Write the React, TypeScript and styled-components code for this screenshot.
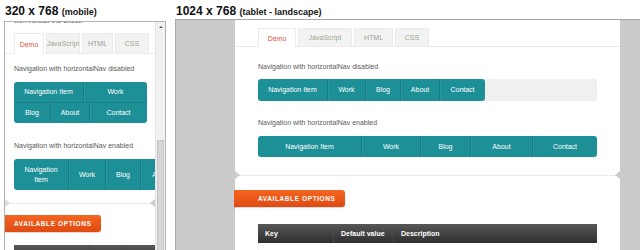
import styled, { createGlobalStyle } from "styled-components";

const GlobalStyle = createGlobalStyle`
  html, body {
    margin: 0;
    padding: 0;
    background: #fff;
  }
  body {
    font-family: "Liberation Sans", Arial, sans-serif;
    overflow: hidden;
  }
`;

const TEAL = "#1d8f97";

type NavItemData = { label: string; w: number };

export default function App() {
    return (
        <>
            <GlobalStyle />
            <Page>
                <Column $w={162}>
                    <DeviceLabel>
                        320 x 768 <small>(mobile)</small>
                    </DeviceLabel>
                    <MobileFrame>
                        <Viewport>
                            <ClippedLine>won't break the effect.</ClippedLine>
                            <TabBar $inset={9} $h={20} $mt={7}>
                                <Tab $w={30} $active>Demo</Tab>
                                <Tab $w={34}>JavaScript</Tab>
                                <Tab $w={31} $muted>HTML</Tab>
                                <Tab $w={34}>CSS</Tab>
                            </TabBar>
                            <Section $pad={9}>
                                <Caption $mt={10}>Navigation with horizontalNav disabled</Caption>
                                <Nav $mt={8} $w={133}>
                                    <NavRow items={[{ label: "Navigation Item", w: 69 }, { label: "Work", w: 64 }]} h={20} />
                                    <NavRow
                                        items={[
                                            { label: "Blog", w: 36 },
                                            { label: "About", w: 39 },
                                            { label: "Contact", w: 58 },
                                        ]}
                                        h={20}
                                        divided
                                    />
                                </Nav>
                                <Caption $mt={18}>Navigation with horizontalNav enabled</Caption>
                                <Nav $mt={8} $w={238}>
                                    <NavRow
                                        items={[
                                            { label: "Navigation Item", w: 54 },
                                            { label: "Work", w: 37 },
                                            { label: "Blog", w: 35 },
                                            { label: "About", w: 42 },
                                            { label: "Contact", w: 70 },
                                        ]}
                                        h={31}
                                        wrapText
                                    />
                                </Nav>
                            </Section>
                            <Divider $mt={13} $left="#dcdcdc" />
                            <OptionsButton $mt={11} $w={96} $pad={9}>
                                AVAILABLE OPTIONS
                            </OptionsButton>
                            <Section $pad={9}>
                                <TableHead $mt={13} $w={150}>
                                    <Th $w={74}>Key</Th>
                                    <Th $w={37}>Default</Th>
                                    <Th>Info</Th>
                                </TableHead>
                            </Section>
                        </Viewport>
                        <Scrollbar>
                            <ScrollArrow />
                            <ScrollTrack />
                            <ScrollThumb />
                        </Scrollbar>
                    </MobileFrame>
                </Column>

                <Column>
                    <DeviceLabel>
                        1024 x 768 <small>(tablet - landscape)</small>
                    </DeviceLabel>
                    <TabletFrame>
                        <TabletPage>
                            <TabBar $inset={23} $h={18} $mt={8}>
                                <Tab $w={38} $active>Demo</Tab>
                                <Tab $w={54}>JavaScript</Tab>
                                <Tab $w={39} $muted>HTML</Tab>
                                <Tab $w={34}>CSS</Tab>
                            </TabBar>
                            <Section $pad={23}>
                                <Caption $mt={15}>Navigation with horizontalNav disabled</Caption>
                                <NavTrack $mt={7}>
                                    <Nav $w={227}>
                                        <NavRow
                                            items={[
                                                { label: "Navigation Item", w: 69 },
                                                { label: "Work", w: 38 },
                                                { label: "Blog", w: 35 },
                                                { label: "About", w: 39 },
                                                { label: "Contact", w: 46 },
                                            ]}
                                            h={22}
                                        />
                                    </Nav>
                                </NavTrack>
                                <Caption $mt={17}>Navigation with horizontalNav enabled</Caption>
                                <Nav $mt={8} $w={339}>
                                    <NavRow
                                        items={[
                                            { label: "Navigation Item", w: 103 },
                                            { label: "Work", w: 59 },
                                            { label: "Blog", w: 50 },
                                            { label: "About", w: 62 },
                                            { label: "Contact", w: 65 },
                                        ]}
                                        h={21}
                                    />
                                </Nav>
                            </Section>
                            <Divider $mt={18} $left="#cccccc" />
                            <OptionsButton $mt={14} $w={111} $pad={24} $shift>
                                AVAILABLE OPTIONS
                            </OptionsButton>
                            <Section $pad={23}>
                                <TableHead $mt={17} $w={339}>
                                    <Th $w={75}>Key</Th>
                                    <Th $w={60}>Default value</Th>
                                    <Th>Description</Th>
                                </TableHead>
                                <TableRow />
                            </Section>
                        </TabletPage>
                    </TabletFrame>
                </Column>
            </Page>
        </>
    );
}

function NavRow({ items, h, divided, wrapText }: { items: NavItemData[]; h: number; divided?: boolean; wrapText?: boolean }) {
    return (
        <Row $h={h} $divided={divided}>
            {items.map((item, i) => (
                <NavItem key={item.label} $w={item.w} $first={i === 0} $wrap={wrapText}>
                    {item.label}
                </NavItem>
            ))}
        </Row>
    );
}

const Page = styled.div`
    display: flex;
    gap: 9px;
    padding-left: 4px;
    height: 250px;
    overflow: hidden;
`;

const Column = styled.div<{ $w?: number }>`
    display: flex;
    flex-direction: column;
    flex: ${(p) => (p.$w ? `0 0 ${p.$w}px` : "1 0 auto")};
    min-width: 0;
`;

const DeviceLabel = styled.div`
    height: 21px;
    box-sizing: border-box;
    padding: 4px 0 0 1px;
    font-size: 12px;
    font-weight: bold;
    color: #111;
    white-space: nowrap;
    line-height: 14px;

    small {
        font-size: 9px;
    }
`;

const MobileFrame = styled.div`
    flex: 1;
    display: flex;
    border: 1px solid #b2b2b2;
    border-bottom: none;
    overflow: hidden;
    background: #fff;
`;

const Viewport = styled.div`
    flex: 1;
    min-width: 0;
    overflow: hidden;
    display: flex;
    flex-direction: column;
`;

const ClippedLine = styled.div`
    margin-top: -6px;
    padding-left: 9px;
    line-height: 10px;
    font-size: 7px;
    color: #5a5a5a;
    white-space: nowrap;
`;

const Scrollbar = styled.div`
    width: 9px;
    flex-shrink: 0;
    display: flex;
    flex-direction: column;
    background: #f1f1f1;
    border-left: 1px solid #e3e3e3;
`;

const ScrollArrow = styled.div`
    height: 10px;
    display: flex;
    align-items: center;
    justify-content: center;

    &::before {
        content: "";
        border: 2px solid transparent;
        border-bottom: 2px solid #555;
        margin-top: -2px;
    }
`;

const ScrollTrack = styled.div`
    height: 108px;
`;

const ScrollThumb = styled.div`
    flex: 1;
    margin: 0 1px;
    background: #d6d6d6;
    border: 1px solid #c6c6c6;
    border-bottom: none;
`;

const TabletFrame = styled.div`
    flex: 1;
    display: flex;
    border-top: 1px solid #a8a8a8;
    border-left: 1px solid #a8a8a8;
    background: #cbcbcb;
`;

const TabletPage = styled.div`
    width: 385px;
    margin-left: 59px;
    flex-shrink: 0;
    background: #fff;
    display: flex;
    flex-direction: column;
`;

const Section = styled.div<{ $pad: number }>`
    padding: 0 ${(p) => p.$pad}px;
    display: flex;
    flex-direction: column;
`;

const TabBar = styled.div<{ $inset: number; $h: number; $mt: number }>`
    display: flex;
    align-items: flex-end;
    gap: 2px;
    height: ${(p) => p.$h}px;
    margin-top: ${(p) => p.$mt}px;
    padding-left: ${(p) => p.$inset}px;
    border-bottom: 1px solid #ebebeb;
    flex-shrink: 0;
`;

const Tab = styled.div<{ $w: number; $active?: boolean; $muted?: boolean }>`
    width: ${(p) => p.$w}px;
    height: ${(p) => (p.$active ? "calc(100% + 1px)" : "100%")};
    margin-bottom: ${(p) => (p.$active ? "-1px" : "0")};
    box-sizing: border-box;
    display: flex;
    align-items: center;
    justify-content: center;
    overflow: hidden;
    white-space: nowrap;
    font-size: 7px;
    background: ${(p) => (p.$active ? "#fff" : "#f3f3f3")};
    color: ${(p) => (p.$active ? "#e0523a" : p.$muted ? "#9a9a9a" : "#98a98c")};
    border: 1px solid #ebebeb;
    border-bottom: none;
    border-radius: 2px 2px 0 0;
`;

const Caption = styled.div<{ $mt: number }>`
    margin-top: ${(p) => p.$mt}px;
    line-height: 10px;
    font-size: 7px;
    color: #5a5a5a;
    white-space: nowrap;
`;

const Nav = styled.div<{ $w: number; $mt?: number }>`
    width: ${(p) => p.$w}px;
    margin-top: ${(p) => p.$mt ?? 0}px;
    flex-shrink: 0;
    display: flex;
    flex-direction: column;
    background: ${TEAL};
    border-radius: 3px;
    overflow: hidden;
`;

const NavTrack = styled.div<{ $mt: number }>`
    margin-top: ${(p) => p.$mt}px;
    width: 339px;
    display: flex;
    background: #f0f0f0;
    border-radius: 3px;
`;

const Row = styled.div<{ $h: number; $divided?: boolean }>`
    display: flex;
    height: ${(p) => p.$h}px;
    border-top: ${(p) => (p.$divided ? "1px solid rgba(0, 0, 0, 0.1)" : "none")};
`;

const NavItem = styled.div<{ $w: number; $first: boolean; $wrap?: boolean }>`
    width: ${(p) => p.$w}px;
    flex-shrink: 0;
    box-sizing: border-box;
    display: flex;
    align-items: center;
    justify-content: center;
    text-align: center;
    padding: 0 ${(p) => (p.$wrap ? 6 : 0)}px;
    white-space: ${(p) => (p.$wrap ? "normal" : "nowrap")};
    line-height: 10px;
    font-size: 7px;
    color: #fff;
    border-left: ${(p) => (p.$first ? "none" : "1px solid rgba(0, 0, 0, 0.12)")};
    box-shadow: ${(p) => (p.$first ? "none" : "inset 1px 0 rgba(255, 255, 255, 0.07)")};
`;

const Divider = styled.div<{ $mt: number; $left: string }>`
    position: relative;
    margin-top: ${(p) => p.$mt}px;
    height: 0;
    border-top: 1px dotted #d6d6d6;
    flex-shrink: 0;

    &::before,
    &::after {
        content: "";
        position: absolute;
        top: -5px;
        border: 4px solid transparent;
    }

    &::before {
        left: 0;
        border-left: 5px solid ${(p) => p.$left};
    }

    &::after {
        right: 0;
        border-right: 5px solid #cbcbcb;
    }
`;

const OptionsButton = styled.div<{ $mt: number; $w: number; $pad: number; $shift?: boolean }>`
    margin-top: ${(p) => p.$mt}px;
    margin-left: ${(p) => (p.$shift ? -1 : 0)}px;
    width: ${(p) => p.$w}px;
    height: 17px;
    box-sizing: border-box;
    padding-left: ${(p) => p.$pad}px;
    flex-shrink: 0;
    display: flex;
    align-items: center;
    background: linear-gradient(#f5651f, #e04a12);
    border-radius: 0 3px 3px 0;
    box-shadow: 0 1px 1px rgba(0, 0, 0, 0.15);
    color: #fff;
    font-size: 6.5px;
    font-weight: bold;
    letter-spacing: 0.6px;
    white-space: nowrap;
`;

const TableHead = styled.div<{ $mt: number; $w: number }>`
    margin-top: ${(p) => p.$mt}px;
    width: ${(p) => p.$w}px;
    height: 19px;
    flex-shrink: 0;
    display: flex;
    background: linear-gradient(#575757, #2f2f2f);
    color: #fff;
    font-size: 7px;
    font-weight: bold;
`;

const Th = styled.div<{ $w?: number }>`
    ${(p) => (p.$w ? `width: ${p.$w}px;` : "flex: 1;")}
    box-sizing: border-box;
    padding-left: 7px;
    display: flex;
    align-items: center;
    white-space: nowrap;
    overflow: hidden;
    border-left: 1px solid #4a4a4a;

    &:first-child {
        border-left: none;
    }
`;

const TableRow = styled.div`
    width: 339px;
    height: 20px;
    border-left: 1px solid #eee;
    border-right: 1px solid #eee;
`;
